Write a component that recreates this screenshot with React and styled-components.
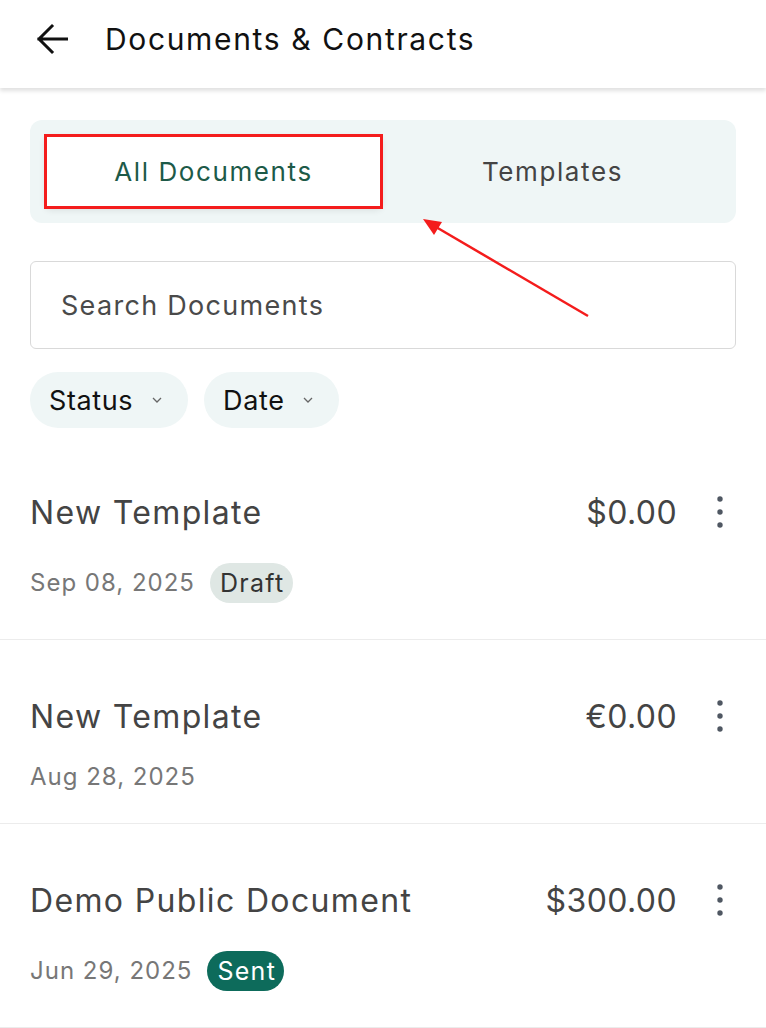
import React from "react";
import styled, { createGlobalStyle } from "styled-components";

const Global = createGlobalStyle`
  html, body { margin: 0; padding: 0; background: #ffffff; }
  body { font-family: Inter, "Noto Sans", sans-serif; -webkit-font-smoothing: antialiased; }
  * { box-sizing: border-box; }
`;

const Page = styled.div`
  position: relative;
  width: 766px;
  min-height: 1028px;
  background: #fff;
  overflow: hidden;
`;

const Header = styled.header`
  height: 88px;
  display: flex;
  align-items: center;
  gap: 35px;
  padding: 0 0 11px 34px;
  background: #fff;
  box-shadow: 0 3px 4px rgba(0, 0, 0, 0.12);
  position: relative;
  z-index: 1;
`;

const BackButton = styled.button`
  border: 0;
  background: none;
  padding: 0;
  width: 36px;
  height: 36px;
  display: flex;
  align-items: center;
  justify-content: center;
  color: #111;
`;

const Title = styled.h1`
  margin: 0;
  font-size: 30px;
  font-weight: 400;
  color: #111;
  letter-spacing: 1.65px;
`;

const Content = styled.main`
  padding: 32px 30px 0;
  display: flex;
  flex-direction: column;
`;

const Tabs = styled.div`
  position: relative;
  display: grid;
  grid-template-columns: 1fr 1fr;
  padding: 14px;
  background: #eff6f6;
  border-radius: 12px;
`;

const Tab = styled.button`
  position: relative;
  height: 75px;
  border: 0;
  border-radius: 8px;
  background: ${(p) => (p.$active ? "#ffffff" : "transparent")};
  box-shadow: ${(p) => (p.$active ? "0 2px 6px rgba(0,0,0,0.08)" : "none")};
  color: ${(p) => (p.$active ? "#1d5a48" : "#444")};
  font-family: Inter, sans-serif;
  font-size: 26px;
  letter-spacing: 1.6px;
  font-weight: 400;
`;

const Highlight = styled.span`
  position: absolute;
  inset: 0;
  border: 3px solid #f41c1c;
  pointer-events: none;
`;

const Search = styled.input`
  margin-top: 38px;
  height: 88px;
  width: 100%;
  border: 1.5px solid #d9d9d9;
  border-radius: 6px;
  padding: 0 30px;
  font-family: Inter, sans-serif;
  font-size: 27px;
  letter-spacing: 1.3px;
  color: #333;
  outline: none;
  &::placeholder { color: #4a4a4a; }
`;

const Filters = styled.div`
  margin-top: 23px;
  display: flex;
  gap: 16px;
`;

const Chip = styled.button`
  height: 56px;
  display: flex;
  align-items: center;
  gap: 19px;
  padding: 0 26px 0 19px;
  border: 0;
  border-radius: 28px;
  background: #eff6f6;
  font-family: Inter, sans-serif;
  font-size: 27px;
  letter-spacing: 0.6px;
  color: #111;
`;

const List = styled.ul`
  list-style: none;
  margin: 8px -30px 0;
  padding: 0;
`;

const Item = styled.li`
  padding: 52px 34px 36px 30px;
  border-bottom: 1.5px solid #ececec;
  display: flex;
  flex-direction: column;
  gap: 27px;
`;

const TopRow = styled.div`
  height: 48px;
  display: flex;
  align-items: center;
`;

const DocTitle = styled.div`
  flex: 1;
  font-size: 32px;
  color: #444;
  letter-spacing: 1.35px;
`;

const Price = styled.div`
  font-size: 32px;
  color: #444;
  letter-spacing: 0.4px;
  margin-right: -1px;
`;

const Kebab = styled.button`
  margin-left: 32px;
  width: 24px;
  height: 40px;
  border: 0;
  background: none;
  padding: 0;
  display: flex;
  align-items: center;
  justify-content: center;
  color: #4f5762;
`;

const MetaRow = styled.div`
  display: flex;
  align-items: center;
  gap: 15px;
  min-height: 20px;
`;

const DateText = styled.span`
  font-size: 24px;
  line-height: 20px;
  color: #777;
  letter-spacing: 1px;
`;

const Badge = styled.span`
  height: 40px;
  display: inline-flex;
  align-items: center;
  padding: 0 8px 0 10px;
  border-radius: 20px;
  font-size: 25px;
  letter-spacing: 1.3px;
  background: ${(p) => (p.$variant === "sent" ? "#0d6b5b" : "#dfe7e4")};
  color: ${(p) => (p.$variant === "sent" ? "#ffffff" : "#333")};
`;

const Arrow = styled.svg`
  position: absolute;
  left: 0;
  top: 0;
  pointer-events: none;
`;

const docs = [
  { title: "New Template", price: "$0.00", date: "Sep 08, 2025", badge: "Draft", variant: "draft" },
  { title: "New Template", price: "€0.00", date: "Aug 28, 2025" },
  { title: "Demo Public Document", price: "$300.00", date: "Jun 29, 2025", badge: "Sent", variant: "sent" },
];

const Chevron = () => (
  <svg width="10" height="6" viewBox="0 0 10 6" fill="none">
    <path d="M1 1l4 4 4-4" stroke="#666" strokeWidth="1.3" />
  </svg>
);

export default function App() {
  return (
    <Page>
      <Global />
      <Header>
        <BackButton aria-label="Back">
          <svg width="32" height="32" viewBox="0 0 32 32" fill="none">
            <path d="M31 16H3M16 3L3 16l13 13" stroke="#111" strokeWidth="3" strokeLinecap="square" />
          </svg>
        </BackButton>
        <Title>Documents &amp; Contracts</Title>
      </Header>
      <Content>
        <Tabs>
          <Tab $active>
            All Documents
            <Highlight />
          </Tab>
          <Tab>Templates</Tab>
        </Tabs>
        <Search placeholder="Search Documents" />
        <Filters>
          <Chip>
            Status <Chevron />
          </Chip>
          <Chip>
            Date <Chevron />
          </Chip>
        </Filters>
        <List>
          {docs.map((d, i) => (
            <Item key={i}>
              <TopRow>
                <DocTitle>{d.title}</DocTitle>
                <Price>{d.price}</Price>
                <Kebab aria-label="More">
                  <svg width="8" height="32" viewBox="0 0 8 32">
                    <circle cx="4" cy="3" r="2.7" fill="currentColor" />
                    <circle cx="4" cy="16" r="2.7" fill="currentColor" />
                    <circle cx="4" cy="29" r="2.7" fill="currentColor" />
                  </svg>
                </Kebab>
              </TopRow>
              <MetaRow>
                <DateText>{d.date}</DateText>
                {d.badge && <Badge $variant={d.variant}>{d.badge}</Badge>}
              </MetaRow>
            </Item>
          ))}
        </List>
      </Content>
      <Arrow width="766" height="1028" viewBox="0 0 766 1028">
        <line x1="588" y1="316" x2="436" y2="227" stroke="#f41c1c" strokeWidth="2.5" />
        <polygon points="423,219 442,222 434,235" fill="#f41c1c" />
      </Arrow>
    </Page>
  );
}
